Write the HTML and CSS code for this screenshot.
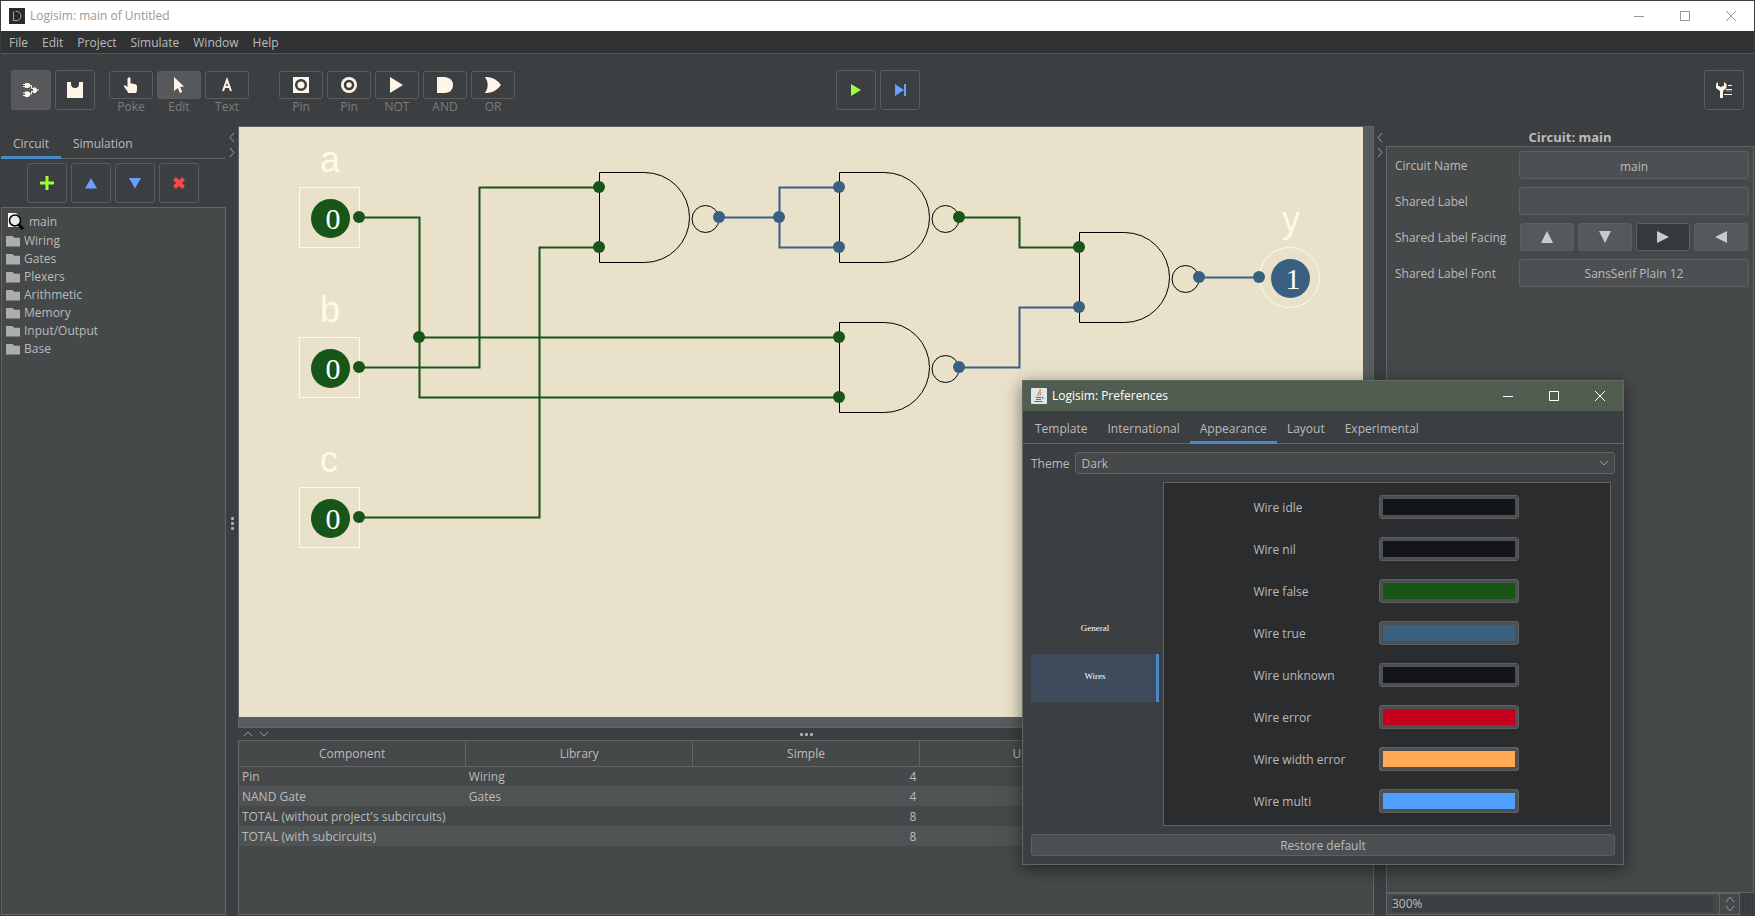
FILE: index.html
```html
<!DOCTYPE html>
<html lang="en">
<head>
<meta charset="utf-8">
<title>Logisim: main of Untitled</title>
<link rel="stylesheet" href="styles.css">
</head>
<body>
<div class="app">
  <header class="titlebar">
    <svg class="app-icon" width="16" height="16" viewBox="0 0 16 16"><rect width="16" height="16" fill="#2b2b2b"/><path d="M4.500 3.500v9M6.500 3.500h2.500q3 1.500 3 4.500t-3 4.500h-5" fill="none" stroke="#aaa49c"/></svg>
    <h1 class="title">Logisim: main of Untitled</h1>
    <div class="win-controls">
      <button aria-label="Minimize"><svg width="10" height="10" viewBox="0 0 10 10"><path d="M0 5.500h10"/></svg></button>
      <button aria-label="Maximize"><svg width="10" height="10" viewBox="0 0 10 10"><path d="M.5.5h9v9h-9z"/></svg></button>
      <button aria-label="Close"><svg width="10" height="10" viewBox="0 0 10 10"><path d="M0 0l10 10M10 0L0 10"/></svg></button>
    </div>
  </header>
  <nav class="menubar">
    <button>File</button><button>Edit</button><button>Project</button><button>Simulate</button><button>Window</button><button>Help</button>
  </nav>
  <div class="toolbar">
    <div class="group">
      <button class="tool-lg on" aria-label="Edit layout"><svg width="16" height="16" viewBox="0 0 16 16"><path d="M2 1h3.500L7 2v3L5.500 6H2zM2 9.500h3.500l1.500 1v3l-1.500 1.500H2zM10 5.500h2.500L14 7v2.500L12.500 11H10z" fill="#fff5e6"/><path d="M0 2.500h3M0 4.500h3M0 11h3M0 13.500h3M6.500 3.500h2v3H10.500M6.500 12h2V9.500H10.500M13 8h3" fill="none" stroke="#fff5e6"/></svg></button>
      <button class="tool-lg" aria-label="Edit appearance"><svg width="16" height="16" viewBox="0 0 16 16"><path d="M0 0h4v2a4 4 0 0 0 8 0V0h4v16H0z" fill="#fff5e6"/></svg></button>
      <div class="group tools">
        <div class="tool"><button id="t-poke"><svg width="16" height="16" viewBox="0 0 16 16"><path d="M5.500 0.500q1.500-.8 2 .8v5l5 1q1.500.4 1.500 2V13l-.8 3H5.500L1 9.500q-.4-1.400 1-1.200L4.500 10V1.500z" fill="#fff5e6"/></svg></button><label for="t-poke">Poke</label></div>
        <div class="tool"><button id="t-edit" class="on"><svg width="16" height="16" viewBox="0 0 16 16"><path d="M3 0l10 9.500-4 .6 2.300 4.900-2.300 1-2.200-5L3 14z" fill="#fff5e6"/></svg></button><label for="t-edit">Edit</label></div>
        <div class="tool"><button id="t-text"><svg width="16" height="16" viewBox="0 0 16 16"><path d="M4 14L8 3l4 11M5.500 10h5" fill="none" stroke="#fff5e6" stroke-width="2"/></svg></button><label for="t-text">Text</label></div>
      </div>
      <div class="group parts">
        <div class="tool"><button id="p1"><svg width="16" height="16" viewBox="0 0 16 16"><path d="M0 0h16v16H0z" fill="#fff5e6"/><circle cx="8" cy="8" r="4.800" fill="none" stroke="#3a3d3f" stroke-width="2.500"/></svg></button><label for="p1">Pin</label></div>
        <div class="tool"><button id="p2"><svg width="16" height="16" viewBox="0 0 16 16"><circle cx="8" cy="8" r="8" fill="#fff5e6"/><circle cx="8" cy="8" r="4" fill="none" stroke="#3a3d3f" stroke-width="2.500"/></svg></button><label for="p2">Pin</label></div>
        <div class="tool"><button id="p3"><svg width="16" height="16" viewBox="0 0 16 16"><path d="M1 0v16l13-8z" fill="#fff5e6"/></svg></button><label for="p3">NOT</label></div>
        <div class="tool"><button id="p4"><svg width="16" height="16" viewBox="0 0 16 16"><path d="M0 0h8q8 1 8 8t-8 8H0z" fill="#fff5e6"/></svg></button><label for="p4">AND</label></div>
        <div class="tool"><button id="p5"><svg width="16" height="16" viewBox="0 0 16 16"><path d="M0 0q10-.5 16 8-6 8.500-16 8 5.500-8 0-16z" fill="#fff5e6"/></svg></button><label for="p5">OR</label></div>
      </div>
    </div>
    <div class="group">
      <button class="tool-lg" aria-label="Run"><svg width="16" height="16" viewBox="0 0 16 16"><path d="M3 2v12l10-6z" fill="#9cff38"/></svg></button>
      <button class="tool-lg" aria-label="Step"><svg width="16" height="16" viewBox="0 0 16 16"><path d="M3 2v12l9-6zM12 2h2v12h-2z" fill="#68a0ff"/></svg></button>
    </div>
    <div class="group end">
      <button class="tool-lg" aria-label="Properties"><svg width="16" height="16" viewBox="0 0 16 16"><path d="M2 0v4h1.500l1 1h1l1-1H8V0l2.500 2v4L7 9v7H4V9L0 6V2z" fill="#fff5e6"/><path d="M12 3.500h4M10 7.500h6M8 12.500h8" stroke="#fff5e6" stroke-width="1"/><path d="M10 9h6" stroke="#8b8886"/></svg></button>
    </div>
  </div>
  <div class="body">
    <aside class="left">
      <div class="tabs"><button class="active">Circuit</button><button>Simulation</button></div>
      <div class="actions">
        <button class="tool-lg" aria-label="Add"><svg width="16" height="16" viewBox="0 0 16 16"><path d="M8 1v14M1 8h14" stroke="#9cff38" stroke-width="3"/></svg></button>
        <button class="tool-lg" aria-label="Move up"><svg width="16" height="16" viewBox="0 0 16 16"><path d="M8 3l6 10.500H2z" fill="#68a0ff"/></svg></button>
        <button class="tool-lg" aria-label="Move down"><svg width="16" height="16" viewBox="0 0 16 16"><path d="M2 3h12L8 13.500z" fill="#68a0ff"/></svg></button>
        <button class="tool-lg" aria-label="Delete"><svg width="16" height="16" viewBox="0 0 16 16"><path d="M3.500 3.500l9 9M12.500 3.500l-9 9" stroke="#ff4747" stroke-width="4"/></svg></button>
      </div>
      <ul class="tree">
        <li class="root"><svg width="18" height="18" viewBox="0 0 18 18"><path d="M1 0h8l4 4v10H1z" fill="#fff5e6"/><path d="M11 11l5 5" stroke="#000" stroke-width="3"/><circle cx="8" cy="7.500" r="5.500" fill="#ece8f0" stroke="#000" stroke-width="1.500"/></svg>main</li>
        <li><i class="folder"></i>Wiring</li>
        <li><i class="folder"></i>Gates</li>
        <li><i class="folder"></i>Plexers</li>
        <li><i class="folder"></i>Arithmetic</li>
        <li><i class="folder"></i>Memory</li>
        <li><i class="folder"></i>Input/Output</li>
        <li><i class="folder"></i>Base</li>
      </ul>
    </aside>
    <div class="split-v">
      <svg width="8" height="26" viewBox="0 0 8 26"><path d="M6 1L2 5.500 6 10M2 16l4 4.500L2 25"/></svg>
      <div class="dots col"><i></i><i></i><i></i></div>
    </div>
    <main class="center">
      <div class="canvas-frame">
        <div class="canvas">
          <svg width="1124" height="590" viewBox="239 127 1124 590">
            <defs>
              <g id="nand"><path d="M45 0H0V90H45A45 45 0 0 0 45 0z"/><circle cx="106" cy="46.500" r="13.500"/></g>
            </defs>
            <g class="outline">
              <rect x="299.500" y="187.500" width="60" height="60"/><rect x="299.500" y="337.500" width="60" height="60"/><rect x="299.500" y="487.500" width="60" height="60"/>
              <circle cx="1289.500" cy="277.500" r="30"/>
            </g>
            <g class="gate">
              <use href="#nand" x="599.500" y="172.500"/><use href="#nand" x="839.500" y="172.500"/><use href="#nand" x="839.500" y="322.500"/><use href="#nand" x="1079.500" y="232.500"/>
            </g>
            <g class="wire low">
              <path d="M359 217.500H419.500V397.500H839M419 337.500H839M359 367.500H479.500V187.500H599M359 517.500H539.500V247.500H599M959 217.500H1019.500V247.500H1079"/>
              <g class="ends"><circle cx="359" cy="217" r="6"/><circle cx="359" cy="367" r="6"/><circle cx="359" cy="517" r="6"/><circle cx="419" cy="337" r="6"/><circle cx="599" cy="187" r="6"/><circle cx="599" cy="247" r="6"/><circle cx="839" cy="337" r="6"/><circle cx="839" cy="397" r="6"/><circle cx="959" cy="217" r="6"/><circle cx="1079" cy="247" r="6"/>
              <circle cx="330.500" cy="218.500" r="19.500"/><circle cx="330.500" cy="368.500" r="19.500"/><circle cx="330.500" cy="518.500" r="19.500"/></g>
            </g>
            <g class="wire high">
              <path d="M719 217.500H779.500M839 187.500H779.500V247.500H839M959 367.500H1019.500V307.500H1079M1199 277.500H1259"/>
              <g class="ends"><circle cx="719" cy="217" r="6"/><circle cx="779" cy="217" r="6"/><circle cx="839" cy="187" r="6"/><circle cx="839" cy="247" r="6"/><circle cx="959" cy="367" r="6"/><circle cx="1079" cy="307" r="6"/><circle cx="1199" cy="277" r="6"/><circle cx="1259" cy="277" r="6"/>
              <circle cx="1290.500" cy="278.500" r="19.500"/></g>
            </g>
            <g class="pin-value"><text x="333" y="229">0</text><text x="333" y="379">0</text><text x="333" y="529">0</text><text x="1293" y="289">1</text></g>
            <g class="pin-label"><text x="330" y="172">a</text><text x="330" y="322">b</text><text x="329" y="472">c</text><text x="1291" y="232">y</text></g>
          </svg>
        </div>
      </div>
      <div class="split-h">
        <svg width="26" height="8" viewBox="0 0 26 8"><path d="M1 6l4-4 4 4M17 2l4 4 4-4"/></svg>
        <div class="dots"><i></i><i></i><i></i></div>
      </div>
      <div class="stats">
        <table>
          <thead><tr><th>Component</th><th>Library</th><th>Simple</th><th>Unique</th><th></th></tr></thead>
          <tbody>
            <tr><td>Pin</td><td>Wiring</td><td class="num">4</td><td></td><td></td></tr>
            <tr><td>NAND Gate</td><td>Gates</td><td class="num">4</td><td></td><td></td></tr>
            <tr><td>TOTAL (without project's subcircuits)</td><td></td><td class="num">8</td><td></td><td></td></tr>
            <tr><td>TOTAL (with subcircuits)</td><td></td><td class="num">8</td><td></td><td></td></tr>
          </tbody>
        </table>
      </div>
    </main>
    <div class="split-v">
      <svg width="8" height="26" viewBox="0 0 8 26"><path d="M6 1L2 5.500 6 10M2 16l4 4.500L2 25"/></svg>
    </div>
    <aside class="right">
      <h2>Circuit: main</h2>
      <div class="props">
        <div class="prop"><label for="cname">Circuit Name</label><input id="cname" value="main"></div>
        <div class="prop"><label for="slabel">Shared Label</label><input id="slabel" value=""></div>
        <div class="prop"><span>Shared Label Facing</span>
          <div class="facing">
            <button aria-label="Up"><svg width="16" height="16" viewBox="0 0 16 16"><path d="M8 2l6 12H2z"/></svg></button>
            <button aria-label="Down"><svg width="16" height="16" viewBox="0 0 16 16"><path d="M2 2h12L8 14z"/></svg></button>
            <button aria-label="Right" class="on"><svg width="16" height="16" viewBox="0 0 16 16"><path d="M2 2v12l12-6z"/></svg></button>
            <button aria-label="Left"><svg width="16" height="16" viewBox="0 0 16 16"><path d="M14 2v12L2 8z"/></svg></button>
          </div>
        </div>
        <div class="prop"><label for="sfont">Shared Label Font</label><button id="sfont" class="field">SansSerif Plain 12</button></div>
      </div>
      <div class="zoombar">
        <div class="spinner">
          <input aria-label="Zoom" value="300%">
          <button aria-label="Change zoom"><svg width="12" height="16" viewBox="0 0 12 16"><path d="M2 6l4-5 4 5M2 10l4 5 4-5"/></svg></button>
        </div>
        <div class="grip"></div>
      </div>
    </aside>
  </div>

  <section class="dialog" role="dialog" aria-labelledby="dlg-title">
    <header class="dlg-title">
      <svg width="16" height="16" viewBox="0 0 16 16"><rect width="16" height="16" rx="1" fill="#dde6ee"/><path d="M9 1q1 2-1 3.500T8 8M10.500 4.500Q8.500 5.500 9.500 7.500" fill="none" stroke="#e8862e" stroke-width="1.200"/><path d="M4.500 9.500h6M5 11.500h5M3.500 13.500h8M11 9q2 .5.500 2" fill="none" stroke="#4f7396"/></svg>
      <h2 id="dlg-title">Logisim: Preferences</h2>
      <div class="win-controls">
        <button aria-label="Minimize"><svg width="10" height="10" viewBox="0 0 10 10"><path d="M0 5.500h10"/></svg></button>
        <button aria-label="Maximize"><svg width="10" height="10" viewBox="0 0 10 10"><path d="M.5.5h9v9h-9z"/></svg></button>
        <button aria-label="Close"><svg width="10" height="10" viewBox="0 0 10 10"><path d="M0 0l10 10M10 0L0 10"/></svg></button>
      </div>
    </header>
    <div class="tabs dlg-tabs"><button>Template</button><button>International</button><button class="active">Appearance</button><button>Layout</button><button>Experimental</button></div>
    <div class="theme"><label for="theme">Theme</label>
      <div class="select"><select id="theme"><option>Dark</option></select><svg width="10" height="8" viewBox="0 0 10 8"><path d="M1 2l4 4 4-4"/></svg></div>
    </div>
    <div class="pref">
      <div class="side"><button>General</button><button class="active">Wires</button></div>
      <div class="colors">
        <label for="w1">Wire idle</label><button id="w1" class="swatch idle"></button>
        <label for="w2">Wire nil</label><button id="w2" class="swatch idle"></button>
        <label for="w3">Wire false</label><button id="w3" class="swatch false"></button>
        <label for="w4">Wire true</label><button id="w4" class="swatch true"></button>
        <label for="w5">Wire unknown</label><button id="w5" class="swatch idle"></button>
        <label for="w6">Wire error</label><button id="w6" class="swatch error"></button>
        <label for="w7">Wire width error</label><button id="w7" class="swatch width"></button>
        <label for="w8">Wire multi</label><button id="w8" class="swatch multi"></button>
      </div>
    </div>
    <button class="restore">Restore default</button>
  </section>
</div>
</body>
</html>
```
FILE: styles.css
```css
* { box-sizing: border-box; }
html, body { height: 100%; }
body { margin: 0; overflow: hidden; background: #3c3f41; color: #bbbbbb; font-family: "Open Sans", "Noto Sans", sans-serif; font-size: 12px; line-height: 16px; }
button, input, select { font: inherit; color: inherit; margin: 0; padding: 0; border: 0; background: none; outline: 0; }
h1, h2, ul { margin: 0; padding: 0; font-size: inherit; font-weight: 400; }
svg { display: block; flex: none; }

.app { position: relative; display: flex; flex-direction: column; height: 100vh; padding: 1px; background: #3c3f41; }

.titlebar { display: flex; align-items: center; height: 30px; padding-left: 8px; background: #fff; color: #999; }
.title { flex: 1; margin-left: 5px; }
.win-controls { display: flex; }
.win-controls button { display: grid; place-items: center; width: 46px; height: 29px; }
.win-controls path { fill: none; stroke: #999; }

.menubar { display: flex; height: 23px; padding-left: 1px; background: #303234; border-bottom: 1px solid #555759; }
.menubar button { padding: 2px 7px 0; }

.toolbar { display: grid; grid-template-columns: 1fr auto 1fr; align-items: start; height: 72px; padding: 16px 10px 0; }
.group { display: flex; gap: 4px; }
.end { justify-content: flex-end; }
.tools { margin-left: 10px; }
.parts { margin-left: 26px; }
.tool-lg { display: grid; place-items: center; width: 40px; height: 40px; border: 1px solid #5b5d5e; border-radius: 3px; }
.on { background: #57585b; }
.tool { display: flex; flex-direction: column; align-items: center; padding-top: 1px; color: #7a7c7e; }
.tool button { display: grid; place-items: center; width: 44px; height: 28px; border: 1px solid #5b5d5e; border-radius: 3px; }

.body { display: flex; flex: 1; min-height: 0; }
.left { display: flex; flex-direction: column; width: 225px; }
.tabs { display: flex; height: 33px; border-bottom: 1px solid #646464; }
.tabs button { padding: 5px 12px 0; height: 33px; border-bottom: 3px solid transparent; }
.tabs .active { border-color: #4a88c7; }
.actions { display: flex; justify-content: center; gap: 4px; padding: 4px 2px 4px 0; }
.tree { flex: 1; list-style: none; padding-top: 3px; background: #464949; border: 1px solid #646464; }
.tree li { display: flex; align-items: center; height: 18px; padding-left: 4px; }
.tree .root { height: 21px; gap: 4px; padding-left: 5px; }
.folder { width: 14px; height: 11px; margin-right: 4px; background: #adadad; clip-path: polygon(0 0, 42% 0, 60% 20%, 100% 20%, 100% 100%, 0 100%); }

.split-v { display: grid; grid-template-rows: 1fr auto 1fr; justify-items: center; width: 12px; padding-top: 6px; }
.split-v path, .split-h path, .spinner path, .select path { fill: none; stroke: #9b9d9e; }
.dots { display: flex; gap: 2px; }
.dots i { width: 3px; height: 3px; border-radius: 1px; background: #adadad; }
.col { flex-direction: column; }

.center { display: flex; flex-direction: column; flex: 1; min-width: 0; }
.canvas-frame { flex: 1; min-height: 0; padding: 0 10px 10px 0; background: #575c5f; border: 1px solid #646464; }
.canvas { height: 100%; overflow: hidden; background: #e9e1ca; }
.wire path { fill: none; stroke-width: 2; }
.low path { stroke: #185518; }
.high path { stroke: #396080; }
.low .ends { fill: #185518; }
.high .ends { fill: #396080; }
.gate { fill: none; stroke: #000; }
.outline { fill: none; stroke: #fffbe0; }
.pin-value { fill: #fff; font: 30px "Liberation Serif", serif; text-anchor: middle; }
.pin-label { fill: #fffbe0; font: 36px "Liberation Sans", sans-serif; text-anchor: middle; }

.split-h { display: grid; grid-template-columns: 1fr auto 1fr; align-items: center; height: 12px; }
.split-h svg { margin-left: 5px; }
.stats { height: 175px; background: #464949; border: 1px solid #646464; }
table { width: 100%; table-layout: fixed; border-collapse: collapse; }
th { height: 25px; padding: 2px 0 0; font-weight: 400; border-bottom: 1px solid #646464; border-right: 1px solid #646464; }
th:last-child { border-right: 0; }
td { height: 20px; padding: 2px 3px 0; }
.num { text-align: right; }
tbody tr:nth-child(even) { background: #505353; }

.right { display: flex; flex-direction: column; width: 368px; }
.right h2 { height: 20px; line-height: 22px; font-size: 13px; font-weight: 700; text-align: center; }
.props { flex: 1; display: flex; flex-direction: column; gap: 8px; padding: 4px 4px 0 8px; background: #464949; border: 1px solid #646464; }
.prop { display: grid; grid-template-columns: 124px 1fr; align-items: center; }
.prop label, .prop span { padding-top: 2px; }
.prop input, .field { width: 100%; height: 28px; padding-top: 2px; text-align: center; background: #4c5052; border: 1px solid #5e6060; border-radius: 3px; }
.facing { display: grid; grid-template-columns: repeat(4, 1fr); gap: 4px; padding: 0 1px; }
.facing button { display: grid; place-items: center; height: 28px; background: #55595c; border: 1px solid #5e6060; border-radius: 3px; }
.facing .on { background: #36393b; }
.facing path { fill: #c3cdd0; }
.zoombar { display: flex; align-items: center; gap: 2px; }
.spinner { display: flex; flex: 1; height: 22px; background: #464949; border: 1px solid #646464; }
.spinner input { flex: 1; min-width: 0; margin: 2px 6px 2px 5px; background: #3c3f41; }
.spinner button { display: grid; place-items: center; width: 20px; border-left: 1px solid #646464; }
.grip { width: 12px; height: 12px; background: radial-gradient(#26282a 1px, transparent 1px) 0 0 / 3px 3px; }

.dialog { position: absolute; left: 1022px; top: 380px; width: 602px; display: flex; flex-direction: column; background: #3c3f41; border: 1px solid #5f6b5f; box-shadow: 0 4px 16px rgba(0, 0, 0, .5); }
.dlg-title { display: flex; align-items: center; height: 30px; padding-left: 8px; background: #525d52; color: #fff; }
.dlg-title h2 { flex: 1; margin-left: 5px; }
.dlg-title .win-controls path { stroke: #fff; }
.dlg-tabs { padding-left: 2px; }
.dlg-tabs button { padding: 5px 10px 0; }
.theme { display: flex; align-items: center; gap: 5px; padding: 8px 8px 0; }
.theme label { padding-top: 2px; }
.select { display: flex; align-items: center; flex: 1; height: 22px; padding-right: 5px; background: #464949; border: 1px solid #646464; border-radius: 3px; }
.select select { flex: 1; appearance: none; padding: 2px 0 0 6px; }
.pref { display: flex; gap: 4px; padding: 8px 12px 8px 8px; }
.side { display: flex; flex-direction: column; justify-content: center; width: 128px; font: 9px "Liberation Serif", serif; color: #fff; }
.side button { height: 48px; padding: 0 0 4px 3px; border-right: 3px solid transparent; }
.side .active { background: #3d4b5c; border-color: #4a88c7; }
.colors { flex: 1; display: grid; grid-template-columns: 125px 140px; gap: 18px 0; justify-content: center; align-items: center; padding: 12px 2px 12px 0; background: #2b2c2e; border: 1px solid #646464; }
.colors label { padding-top: 2px; }
.swatch { height: 24px; border: 1px solid #5e6060; border-radius: 3px; box-shadow: inset 0 0 0 3px #4c5052; background: #15161a; }
.false { background: #185518; }
.true { background: #396080; }
.error { background: #c4001c; }
.width { background: #ffab54; }
.multi { background: #4f9fff; }
.restore { height: 22px; margin: 0 8px 8px; padding-top: 2px; background: #4c5052; border: 1px solid #5e6060; border-radius: 3px; }
```
